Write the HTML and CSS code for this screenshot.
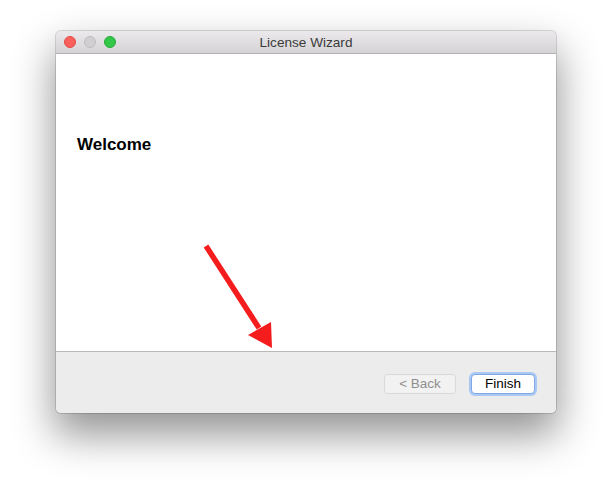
FILE: index.html
```html
<!DOCTYPE html>
<html>
<head>
<meta charset="utf-8">
<link rel="stylesheet" href="styles.css">
</head>
<body>
<div class="stage">
  <div class="window">
    <div class="titlebar">
      <div class="lights">
        <span class="light red"></span>
        <span class="light gray"></span>
        <span class="light green"></span>
      </div>
      <div class="title">License Wizard</div>
    </div>
    <div class="content">
      <h1 class="heading">Welcome</h1>
    </div>
    <div class="footer">
      <button class="btn disabled">&lt; Back</button>
      <button class="btn primary">Finish</button>
    </div>
  </div>
  <svg class="arrow" width="612" height="494" viewBox="0 0 612 494">
    <line x1="206" y1="246" x2="259" y2="328" stroke="#f41c1c" stroke-width="5.5" stroke-linecap="butt"/>
    <polygon points="248,335 271,322 272,348" fill="#f41c1c"/>
  </svg>
</div>
</body>
</html>
```
FILE: styles.css
```css
html, body {
  margin: 0;
  padding: 0;
  background: #ffffff;
}
.stage {
  position: relative;
  width: 612px;
  height: 494px;
  padding: 31px 0 0 56px;
  box-sizing: border-box;
  font-family: "Liberation Sans", Arial, sans-serif;
}
.window {
  width: 500px;
  height: 382px;
  display: flex;
  flex-direction: column;
  border-radius: 5px;
  overflow: hidden;
  box-shadow: 0 0 0 1px rgba(0,0,0,0.14), 0 20px 40px 2px rgba(0,0,0,0.42);
  background: #ececec;
}
.titlebar {
  height: 23px;
  flex: none;
  display: flex;
  align-items: center;
  position: relative;
  background: linear-gradient(#ebe9eb, #d5d3d5);
  border-bottom: 1px solid #b4b2b4;
  box-sizing: border-box;
}
.lights {
  display: flex;
  gap: 8px;
  padding-left: 8px;
  align-items: center;
}
.light {
  width: 12px;
  height: 12px;
  border-radius: 50%;
  box-sizing: border-box;
}
.red { background: #fc605c; border: 1px solid #de4a45; }
.gray { background: #d1cfd1; border: 1px solid #bfbdbf; }
.green { background: #34c84a; border: 1px solid #27aa35; }
.title {
  position: absolute;
  left: 0;
  right: 0;
  text-align: center;
  font-size: 13.6px;
  color: #3a3a3a;
  line-height: 23px;
}
.content {
  height: 298px;
  flex: none;
  background: #ffffff;
  border-bottom: 1px solid #b9b9b9;
  box-sizing: border-box;
  padding: 81px 0 0 21px;
}
.heading {
  margin: 0;
  font-size: 17px;
  font-weight: bold;
  color: #000;
  line-height: 20px;
}
.footer {
  flex: 1;
  display: flex;
  justify-content: flex-end;
  align-items: flex-start;
  padding: 21px 21px 0 0;
  gap: 15px;
  background: #ececec;
}
.btn {
  font-family: "Liberation Sans", Arial, sans-serif;
  font-size: 13.5px;
  height: 20px;
  padding: 0;
  border-radius: 4px;
  box-sizing: border-box;
  background: #ffffff;
  color: #000;
  line-height: 18px;
}
.disabled {
  width: 72px;
  margin-top: 1px;
  background: #f2f2f2;
  color: #8e8e8e;
  border: 1px solid #d8d8d8;
}
.primary {
  width: 64px;
  margin-top: 1px;
  border: 1px solid #7fa8e6;
  box-shadow: 0 0 0 2px #a9c8f4;
}
.arrow {
  position: absolute;
  left: 0;
  top: 0;
}
```
